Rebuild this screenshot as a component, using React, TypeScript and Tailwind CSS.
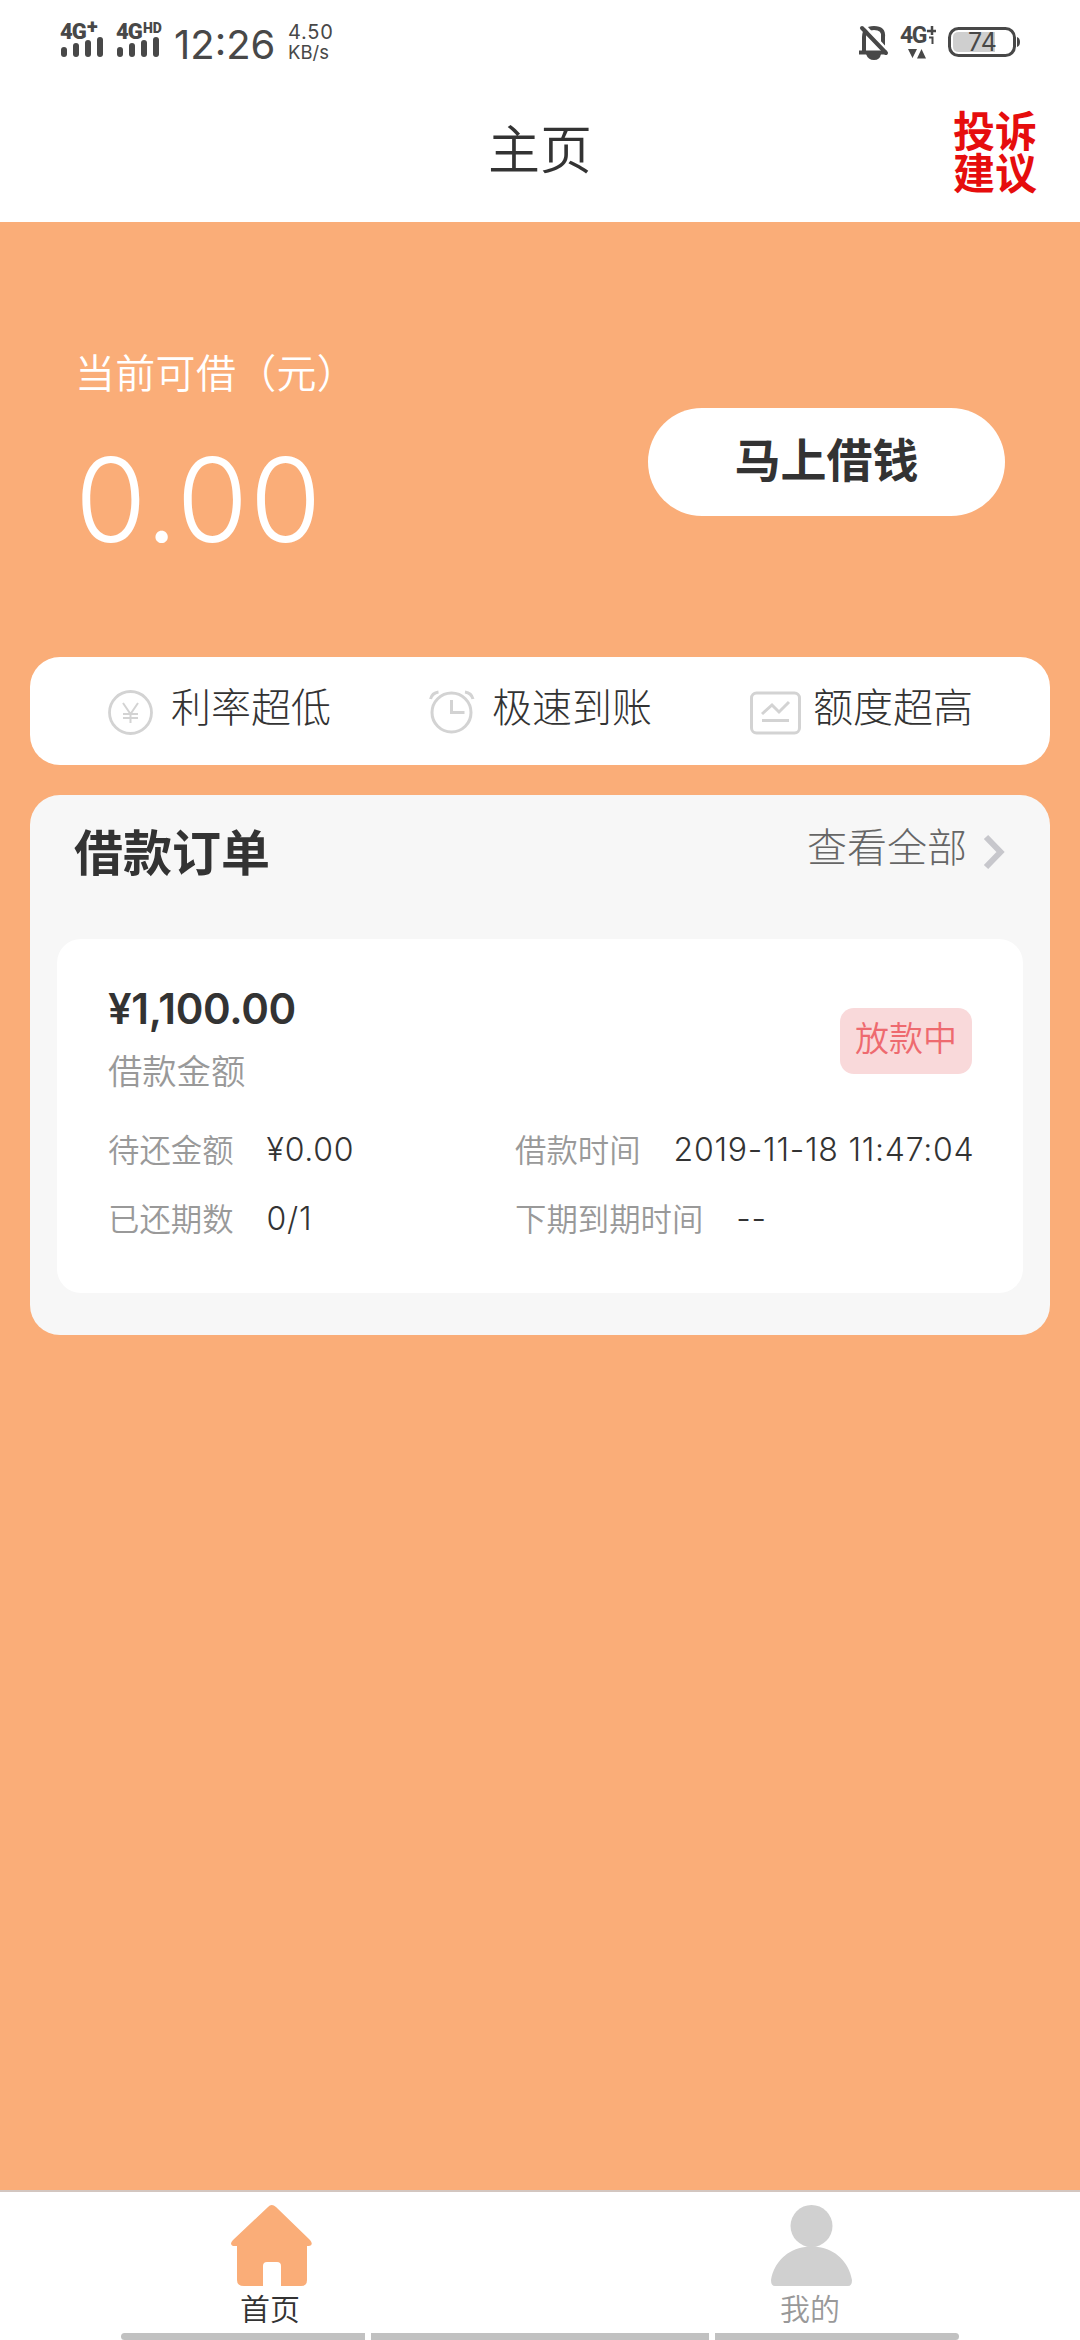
import { ReactNode } from "react";

const cjk = "font-['Noto_Sans_CJK_SC',sans-serif]";
const latin = "font-['Inter',sans-serif]";

function SignalBars() {
  return (
    <div className="flex h-5 items-end gap-1.5">
      <span className="h-2.5 w-1.5 rounded-[3px] bg-[#484848]" />
      <span className="h-3.5 w-1.5 rounded-[3px] bg-[#484848]" />
      <span className="h-[17px] w-1.5 rounded-[3px] bg-[#484848]" />
      <span className="h-5 w-1.5 rounded-[3px] bg-[#484848]" />
    </div>
  );
}

function Signal({ label, suffix }: { label: string; suffix: string }) {
  return (
    <div className="flex w-[56px] flex-col">
      <div className="flex h-[15px] items-start font-['Roboto',sans-serif] font-black leading-none">
        <span className="mt-[-1px] w-[27px] text-[22px] tracking-[-1px]">{label}</span>
        <span className={suffix === "+" ? "mt-[-6px] text-[20px]" : "mt-[-1px] text-[14px]"}>{suffix}</span>
      </div>
      <div className="pl-px">
        <SignalBars />
      </div>
    </div>
  );
}

function StatusBar() {
  return (
    <div className={`flex h-[84px] items-start justify-between pl-[60px] pr-[59px] font-normal text-[#484848] ${latin}`}>
      <div className="flex">
        <div className="flex pt-[22px]">
          <Signal label="4G" suffix="+" />
          <Signal label="4G" suffix="HD" />
        </div>
        <span className="ml-[2px] mt-[25px] w-[114px] text-[40px] leading-none">12:26</span>
        <div className="mt-[23px] text-[20px] leading-[19.5px]">
          <p className="tracking-[0.8px]">4.50</p>
          <p className="text-[18.500px]">KB/s</p>
        </div>
      </div>
      <div className="flex pt-[24px]">
        <svg width="32" height="36" viewBox="0 0 32 36" fill="none" stroke="#484848" strokeWidth="4">
          <path d="M6 28V13q0-9 10-9t9 9v15" />
          <path d="M1 28.500h28" />
          <path d="M8 30q2 6 8 6t7-6z" fill="#484848" stroke="none" />
          <path d="M7 2l22 24" stroke="#fff" strokeWidth="3" />
          <path d="M4 4l24 25" strokeLinecap="round" />
        </svg>
        <div className="ml-[10px] w-[38px]">
          <div className="flex h-[25px] font-['Roboto',sans-serif] font-bold leading-none">
            <span className="w-[27px] text-[23px] tracking-[-1.5px]">4G</span>
            <svg width="10" height="20" viewBox="0 0 10 20" fill="none" stroke="#484848" strokeWidth="2.500">
              <path d="M0 7h9M5 2v9" />
              <path d="M2 13.500h3.500V20" strokeWidth="2" />
            </svg>
          </div>
          <svg className="ml-[8px]" width="19" height="10" viewBox="0 0 19 10" fill="#484848">
            <path d="M0 0h9L4.500 9zM9 9.500h9L13.500 0z" />
          </svg>
        </div>
        <svg className="ml-[10px] mt-[3px]" width="73" height="30" viewBox="0 0 73 30">
          <rect x="1.500" y="1.500" width="65" height="27" rx="9" fill="#fff" stroke="#484848" strokeWidth="3" />
          <path d="M11 5h36v20H11q-6 0-6-5V10q0-5 6-5z" fill="#cfcfcf" />
          <path d="M69 10q3 1 3 5t-3 5z" fill="#484848" />
          <text x="34.500" y="24" textAnchor="middle" fontSize="25" fontFamily="Inter, sans-serif" fill="#484848">
            74
          </text>
        </svg>
      </div>
    </div>
  );
}

function Feature({ icon, children }: { icon: ReactNode; children: ReactNode }) {
  return (
    <div className="flex w-[321px] shrink-0 items-start">
      <div className="flex w-[63px] pt-[33px]">{icon}</div>
      <span className="mt-[28px] text-[40px] font-light leading-none">{children}</span>
    </div>
  );
}

function YenIcon() {
  return (
    <svg width="46" height="46" viewBox="0 0 46 46" fill="none" stroke="#d3d3d3" strokeWidth="2.500">
      <circle cx="22.500" cy="22.500" r="21" strokeWidth="2.800" />
      <path d="M15 13l7.500 11L30 13M22.500 24v9M15 24h15M15 28h15" strokeWidth="2" />
    </svg>
  );
}

function AlarmIcon() {
  return (
    <svg width="46" height="46" viewBox="0 0 46 46" fill="none" stroke="#d3d3d3" strokeWidth="3">
      <circle cx="22.500" cy="22.500" r="19.500" />
      <path d="M22.500 10v12.500h13" />
      <path d="M1.500 9Q3 3 9.500 2M36 2q6.500 1 8 7" />
    </svg>
  );
}

function ChartIcon() {
  return (
    <svg width="51" height="46" viewBox="0 0 51 46" fill="none" stroke="#d3d3d3" strokeWidth="3">
      <rect x="1.500" y="3" width="48" height="40" rx="5" />
      <path d="M12 24l10-9 7 7L39 12M12 30.500h27" />
    </svg>
  );
}

function Field({ label, value }: { label: string; value: string }) {
  return (
    <div className="flex items-start">
      <span className="mr-[33px] text-[31.400px] leading-none text-[#999]">{label}</span>
      <span className={`mt-px text-[32px] font-light leading-none tracking-[0.75px] text-[#333] ${latin}`}>{value}</span>
    </div>
  );
}

function OrderCard() {
  return (
    <div className="ml-[27px] mr-[27px] h-[354px] rounded-[24px] bg-white pl-[51px] pr-[51px]">
      <div className="flex h-[194px] justify-between">
        <div>
          <p className={`mt-[49px] text-[42px] font-semibold leading-none tracking-[-0.3px] ${latin}`}>¥1,100.00</p>
          <p className="mt-[22px] text-[34.300px] leading-none text-[#999]">借款金额</p>
        </div>
        <div className="mt-[69px] h-[66px] w-[132px] rounded-[14px] bg-[#f9d9da] pt-[12px] text-center text-[34px] leading-none text-[#ee6a6f]">
          放款中
        </div>
      </div>
      <div className="grid grid-cols-[407px_1fr] gap-y-[36px] whitespace-nowrap">
        <Field label="待还金额" value="¥0.00" />
        <Field label="借款时间" value="2019-11-18 11:47:04" />
        <Field label="已还期数" value="0/1" />
        <Field label="下期到期时间" value="--" />
      </div>
    </div>
  );
}

function TabBar() {
  return (
    <nav className="flex h-[150px] flex-col border-t-2 border-[#d3c6c0] bg-white text-[30px] leading-none">
      <div className="flex h-[141px]">
        <div className="flex w-1/2 flex-col items-center pt-[13px]">
          <svg className="ml-[3px]" width="81" height="81" viewBox="0 0 81 81" fill="#faad78">
            <path d="M37 2Q40.500-2 45 2L79 35Q83 40 78 41H76V75Q76 81 70 81H50V61Q50 57 46 57H36Q32 57 32 61V81H13Q6 81 6 75V41H2Q-2 39 2 35Z" />
          </svg>
          <span className="mt-[6px] text-[#333]">首页</span>
        </div>
        <div className="flex w-1/2 flex-col items-center pt-[13px]">
          <svg className="ml-[3px]" width="81" height="81" viewBox="0 0 81 81" fill="#d0d0d0">
            <circle cx="40.500" cy="21" r="21" />
            <path d="M34 42Q40.500 40 47 42C64 44 78 57 81 75Q81 81 77 81H4Q0 81 0 75C3 57 17 44 34 42Z" />
          </svg>
          <span className="mt-[6px] text-[#999]">我的</span>
        </div>
      </div>
      <div className="flex h-[7px] justify-center gap-[6px]">
        <span className="w-[244px] rounded-l-full bg-[#c1c1c1]" />
        <span className="w-[338px] bg-[#c1c1c1]" />
        <span className="w-[244px] rounded-r-full bg-[#c1c1c1]" />
      </div>
    </nav>
  );
}

export default function App() {
  return (
    <div className={`flex h-[2340px] w-[1080px] flex-col overflow-hidden bg-[#faad78] font-[350] text-[#333] ${cjk}`}>
      <header className="h-[222px] bg-white">
        <StatusBar />
        <div className="grid grid-cols-[1fr_auto_1fr] items-start">
          <span />
          <h1 className="mt-[37px] text-[52px] leading-none">主页</h1>
          <p className="mr-[43px] mt-[24px] justify-self-end text-[42px] font-bold leading-[42px] text-[#e60d0d]">
            投诉
            <br />
            建议
          </p>
        </div>
      </header>

      <main className="flex-1 px-[30px]">
        <section className="flex h-[435px] justify-between pl-[45px] pr-[45px] text-white">
          <div>
            <p className="mt-[129px] text-[40px] leading-none tracking-[0.3px]">当前可借（元）</p>
            <p className={`mt-[51px] text-[116px] font-light leading-none tracking-[1.5px] ${latin}`}>0.00</p>
          </div>
          <button className="mt-[186px] flex h-[108px] w-[357px] items-start justify-center rounded-full bg-white pt-[26px] text-[46px] font-bold leading-none text-[#333]">
            马上借钱
          </button>
        </section>

        <section className="flex h-[108px] rounded-[30px] bg-white pl-[78px]">
          <Feature icon={<YenIcon />}>利率超低</Feature>
          <Feature icon={<AlarmIcon />}>极速到账</Feature>
          <Feature icon={<ChartIcon />}>额度超高</Feature>
        </section>

        <section className="mt-[30px] h-[540px] rounded-[30px] bg-[#f7f7f7]">
          <div className="flex h-[144px] items-start justify-between pl-[44px] pr-[45px]">
            <h2 className="mt-[30px] text-[49px] font-bold leading-none">借款订单</h2>
            <div className="flex items-start">
              <span className="mt-[30px] text-[40px] font-light leading-none text-[#666]">查看全部</span>
              <svg className="ml-[16px] mt-[39px]" width="22" height="36" viewBox="0 0 22 36" fill="none" stroke="#c7c7cc" strokeWidth="6">
                <path d="M3 3l14.500 15L3 33" />
              </svg>
            </div>
          </div>
          <OrderCard />
        </section>
      </main>

      <TabBar />
    </div>
  );
}
